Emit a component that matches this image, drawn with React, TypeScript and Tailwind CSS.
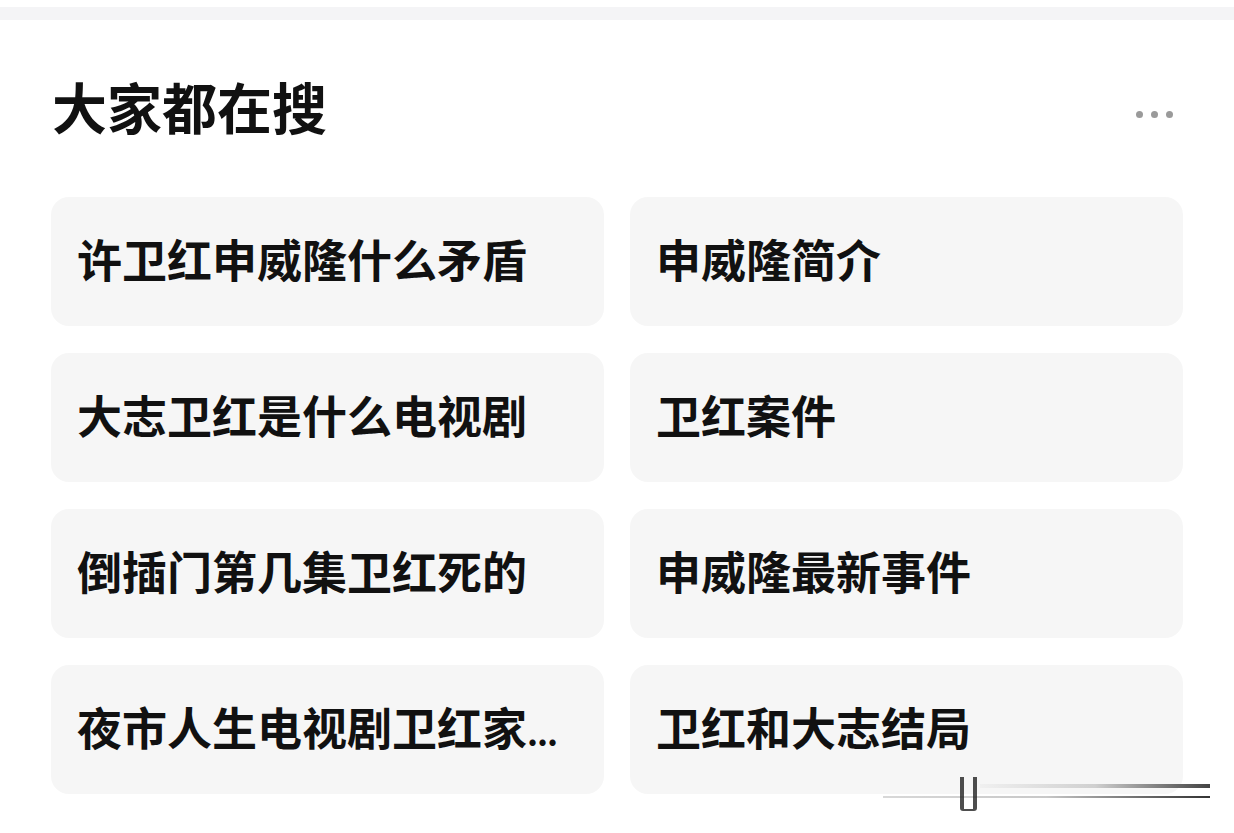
const items = [
  '许卫红申威隆什么矛盾',
  '申威隆简介',
  '大志卫红是什么电视剧',
  '卫红案件',
  '倒插门第几集卫红死的',
  '申威隆最新事件',
  '夜市人生电视剧卫红家',
  '卫红和大志结局',
];

export default function App() {
  return (
    <div
      className="relative w-[1234px] h-[833px] overflow-hidden bg-white text-[#111]"
      style={{ fontFamily: '"Noto Sans CJK SC", "Noto Sans", sans-serif' }}
    >
      <div className="h-[7px]" />
      <div className="h-[13px] bg-[#f4f4f6]" />

      <div className="px-[51px]">
        <div className="flex items-center justify-between h-[177px]">
          <h2 className="text-[55px] font-bold leading-none pl-[1px] pb-[6px]">大家都在搜</h2>
          <div className="flex items-center gap-[8px] pr-[10px] pt-[11px]">
            <span className="w-[7px] h-[7px] rounded-full bg-[#9a9a9a]" />
            <span className="w-[7px] h-[7px] rounded-full bg-[#9a9a9a]" />
            <span className="w-[7px] h-[7px] rounded-full bg-[#9a9a9a]" />
          </div>
        </div>

        <div className="grid grid-cols-2 gap-x-[26px] gap-y-[27px]">
          {items.map((t, i) => (
            <div
              key={t}
              className="flex items-center h-[129px] rounded-[18px] bg-[#f6f6f6] pl-[26px] pr-[30px] pb-[6px]"
            >
              <span className="text-[45px] font-bold leading-none whitespace-nowrap">
                {t}
                {i === 6 && <span className="text-[34px] tracking-[-1px]">...</span>}
              </span>
            </div>
          ))}
        </div>
      </div>

      {/* watermark */}
      <div className="absolute left-[883px] top-[796px] w-[327px] h-[2px] bg-gradient-to-r from-[#d8d8d8] via-[#c8c8c8] to-[#333]" />
      <div className="absolute left-[980px] top-[784px] w-[230px] h-[4px] bg-gradient-to-r from-[#f0f0f0] via-[#d0d0d0] to-[#444]" />
      <div className="absolute left-[960px] top-[777px] w-[17px] h-[34px] border-x-[4px] border-b-[2px] border-[#222] rounded-b-[3px] opacity-80" />
    </div>
  );
}
